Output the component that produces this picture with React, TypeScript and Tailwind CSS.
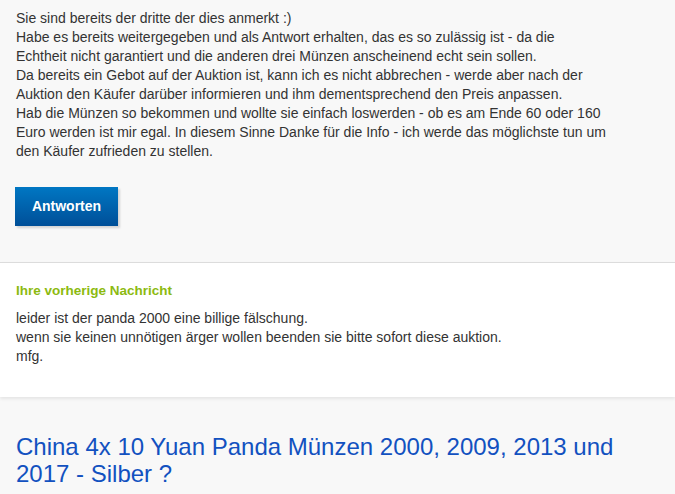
export default function App() {
  return (
    <div className="min-h-[494px] bg-[#f8f8f8] font-['Liberation_Sans',Arial,sans-serif] text-[#333]">
      <section className="px-4 pt-[9px] pb-9">
        <p className="whitespace-nowrap text-[14px] leading-[19px]">
          Sie sind bereits der dritte der dies anmerkt :)
          <br />
          Habe es bereits weitergegeben und als Antwort erhalten, das es so zulässig ist - da die
          <br />
          Echtheit nicht garantiert und die anderen drei Münzen anscheinend echt sein sollen.
          <br />
          Da bereits ein Gebot auf der Auktion ist, kann ich es nicht abbrechen - werde aber nach der
          <br />
          Auktion den Käufer darüber informieren und ihm dementsprechend den Preis anpassen.
          <br />
          Hab die Münzen so bekommen und wollte sie einfach loswerden - ob es am Ende 60 oder 160
          <br />
          Euro werden ist mir egal. In diesem Sinne Danke für die Info - ich werde das möglichste tun um
          <br />
          den Käufer zufrieden zu stellen.
        </p>
        <button className="-ml-px mt-[26px] h-[39px] w-[103px] bg-gradient-to-b from-[#0077c3] to-[#004f98] text-[14px] font-bold text-white shadow-[2px_2px_2px_rgba(0,0,0,0.15)]">
          Antworten
        </button>
      </section>
      <section className="border-t border-[#dcdcdc] bg-white px-4 pt-[18px] pb-[31px] shadow-[0_2px_3px_rgba(0,0,0,0.08)]">
        <h3 className="text-[13.5px] font-bold leading-[19px] text-[#8cba10]">Ihre vorherige Nachricht</h3>
        <p className="mt-[9px] text-[14px] leading-[19px]">
          leider ist der panda 2000 eine billige fälschung.
          <br />
          wenn sie keinen unnötigen ärger wollen beenden sie bitte sofort diese auktion.
          <br />
          mfg.
        </p>
      </section>
      <section className="px-4 pt-[36px]">
        <h2 className="max-w-[620px] text-[24px] leading-[27px] text-[#1251c0]">
          China 4x 10 Yuan Panda Münzen 2000, 2009, 2013 und 2017 - Silber ?
        </h2>
      </section>
    </div>
  );
}
